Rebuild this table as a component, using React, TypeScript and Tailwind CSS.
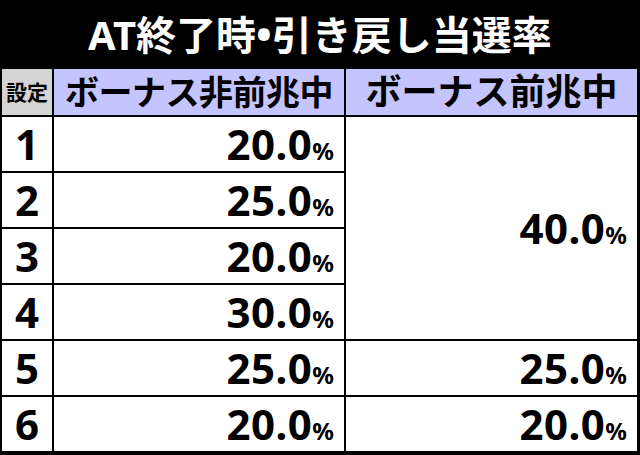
import React from "react";

const font = { fontFamily: '"Noto Sans", "Noto Sans CJK JP", sans-serif' };

const rows = [
  { n: "1", a: "20.0" },
  { n: "2", a: "25.0" },
  { n: "3", a: "20.0" },
  { n: "4", a: "30.0" },
  { n: "5", a: "25.0", b: "25.0" },
  { n: "6", a: "20.0", b: "20.0" },
];

const Rate = ({ v }: { v: string }) => (
  <span className="font-bold leading-none text-black">
    <span className="text-[42px] tracking-[0.5px]">{v}</span>
    <span className="text-[24px]">%</span>
  </span>
);

const App = () => {
  return (
    <div className="w-[640px] h-[455px] bg-black overflow-hidden" style={font}>
      {/* title */}
      <div className="h-[67px] flex items-center justify-center pt-[1px]">
        <h1 className="text-white font-bold text-[40px] leading-none">
          AT終了時<span className="text-[42px]">•</span>引き戻し当選率
        </h1>
      </div>

      {/* table */}
      <div className="grid grid-cols-[50px_290px_291px] grid-rows-[46px_repeat(6,54px)] gap-[2px] p-[2px] pr-[3px]">
        <div className="bg-[#d4d4d4] flex items-center justify-center font-bold text-[21px] leading-none text-black">
          設定
        </div>
        <div className="bg-[#c4c4ff] flex items-center justify-center font-bold text-[34px] leading-none text-black tracking-[-0.5px]">
          ボーナス非前兆中
        </div>
        <div className="bg-[#c4c4ff] flex items-center justify-center font-bold text-[36px] leading-none text-black">
          ボーナス前兆中
        </div>

        {rows.map((r, i) => (
          <React.Fragment key={r.n}>
            <div className="bg-white flex items-center justify-center font-bold text-[42px] leading-none text-black">
              {r.n}
            </div>
            <div className="bg-white flex items-center justify-end pr-[10px]">
              <Rate v={r.a} />
            </div>
            {i === 0 && (
              <div className="bg-white row-span-4 flex items-center justify-end pr-[10px]">
                <Rate v="40.0" />
              </div>
            )}
            {r.b && (
              <div className="bg-white flex items-center justify-end pr-[10px]">
                <Rate v={r.b} />
              </div>
            )}
          </React.Fragment>
        ))}
      </div>
    </div>
  );
};

export default App;
